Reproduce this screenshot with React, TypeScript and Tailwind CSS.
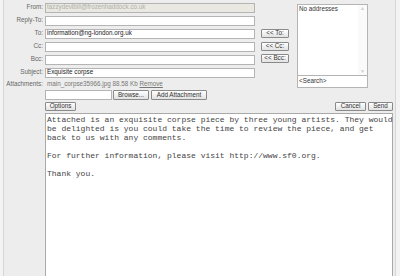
export default function App() {
  const rows = [
    { label: "From:", value: "tazzydevlbiii@frozenhaddock.co.uk", disabled: true },
    { label: "Reply-To:", value: "" },
    { label: "To:", value: "information@ng-london.org.uk" },
    { label: "Cc:", value: "" },
    { label: "Bcc:", value: "" },
    { label: "Subject:", value: "Exquisite corpse" },
  ];

  const btn =
    "h-[9px] flex items-center justify-center rounded-[1px] border border-[#8a8a8a] bg-gradient-to-b from-white to-[#e2e2e2] text-[#333] leading-none";

  return (
    <div className="w-[400px] h-[276px] overflow-hidden bg-[#f3f3f3] font-['Liberation_Sans',Arial,sans-serif] text-[6.3px] leading-none">
      <div className="ml-[3px] w-[393px] h-full overflow-hidden border-x border-[#d6d6d6] bg-[#ededed] flex flex-col">
        {/* top area */}
        <div className="flex h-[100px] shrink-0">
          <div className="flex flex-col pt-[1px]">
            {rows.map((r) => (
              <div key={r.label} className="flex items-center h-[13px]">
                <div className="w-[41px] pr-[2px] text-right text-[#666]">
                  {r.label}
                </div>
                <div
                  className={
                    "w-[210px] h-[10px] border border-[#b4b4b4] flex items-center px-[1px] " +
                    (r.disabled
                      ? "bg-[#e9e9e2] text-[#b0b0a8]"
                      : "bg-white text-[#222]")
                  }
                >
                  {r.value}
                </div>
              </div>
            ))}
            <div className="flex items-center h-[10px]">
              <div className="w-[41px] pr-[2px] text-right text-[#666]">
                Attachments:
              </div>
              <div className="pl-[2px] text-[#777]">
                main_corpse35966.jpg 88.58 Kb{" "}
                <span className="underline">Remove</span>
              </div>
            </div>
            <div className="flex items-center h-[10px] ml-[41px] mt-[1px]">
              <div className="w-[67px] h-[10px] border border-[#b4b4b4] bg-white" />
              <div className={btn + " ml-[1px] w-[36px] h-[10px]"}>Browse...</div>
              <div className={btn + " ml-[2px] w-[56px] h-[10px]"}>
                Add Attachment
              </div>
            </div>
          </div>

          {/* add buttons */}
          <div className="ml-[6px] w-[28px] flex flex-col pt-[29px] gap-[3.5px]">
            <div className={btn}>&lt;&lt; To:</div>
            <div className={btn}>&lt;&lt; Cc:</div>
            <div className={btn}>&lt;&lt; Bcc:</div>
          </div>

          {/* address list */}
          <div className="ml-[8px] mt-[4px] w-[71px] flex flex-col">
            <div className="relative h-[72px] border border-[#b4b4b4] bg-white text-[#333] px-[1px] pt-[1px]">
              No addresses
              <div className="absolute right-0 top-0 bottom-0 w-[9px] bg-[#fafafa] flex flex-col justify-between items-center py-[1px] text-[#cfcfcf] text-[5px]">
                <span>▲</span>
                <span>▼</span>
              </div>
            </div>
            <div className="h-[12px] border border-t-0 border-[#b4b4b4] bg-white text-[#333] px-[1px] flex items-center">
              &lt;Search&gt;
            </div>
          </div>
        </div>

        {/* action row */}
        <div className="flex items-center h-[10px] mt-[1px] shrink-0">
          <div className={btn + " ml-[41px] w-[31px]"}>Options</div>
          <div className="flex-1" />
          <div className={btn + " w-[31px]"}>Cancel</div>
          <div className={btn + " ml-[2px] w-[25px] mr-[2px]"}>Send</div>
        </div>

        {/* body */}
        <div className="ml-[41px] mr-[2px] mt-[2px] h-[200px] shrink-0 border border-[#a9a9a9] bg-white px-[1px] pt-[1px] font-['Liberation_Mono','Courier_New',monospace] text-[8px] leading-[9px] text-[#444] whitespace-pre">
          {"Attached is an exquisite corpse piece by three young artists. They would\nbe delighted is you could take the time to review the piece, and get\nback to us with any comments.\n\nFor further information, please visit http://www.sf0.org.\n\nThank you."}
        </div>
      </div>
    </div>
  );
}
